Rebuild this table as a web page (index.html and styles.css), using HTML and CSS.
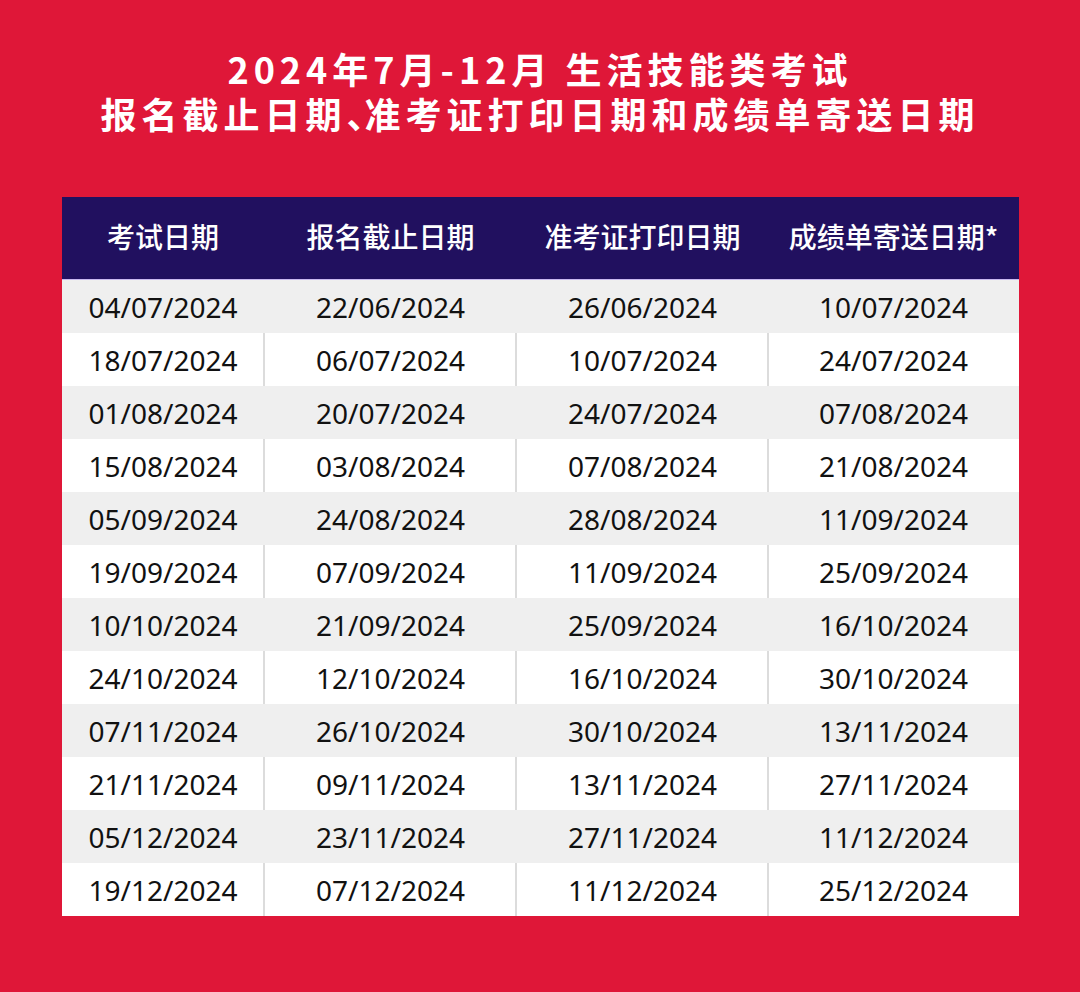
FILE: index.html
```html
<!DOCTYPE html>
<html lang="zh-CN">
<head>
<meta charset="utf-8">
<link rel="stylesheet" href="styles.css">
</head>
<body>
<div class="page">
  <h1 class="title">
    <span class="line">2024年7月-12月 生活技能类考试</span>
    <span class="line">报名截止日期<span class="punct">、</span>准考证打印日期和成绩单寄送日期</span>
  </h1>
  <div class="table">
    <div class="head">
      <div class="hc">考试日期</div>
      <div class="hc">报名截止日期</div>
      <div class="hc">准考证打印日期</div>
      <div class="hc">成绩单寄送日期*</div>
    </div>
    <div class="row odd"><div class="c">04/07/2024</div><div class="c">22/06/2024</div><div class="c">26/06/2024</div><div class="c">10/07/2024</div></div>
    <div class="row even"><div class="c">18/07/2024</div><div class="c">06/07/2024</div><div class="c">10/07/2024</div><div class="c">24/07/2024</div></div>
    <div class="row odd"><div class="c">01/08/2024</div><div class="c">20/07/2024</div><div class="c">24/07/2024</div><div class="c">07/08/2024</div></div>
    <div class="row even"><div class="c">15/08/2024</div><div class="c">03/08/2024</div><div class="c">07/08/2024</div><div class="c">21/08/2024</div></div>
    <div class="row odd"><div class="c">05/09/2024</div><div class="c">24/08/2024</div><div class="c">28/08/2024</div><div class="c">11/09/2024</div></div>
    <div class="row even"><div class="c">19/09/2024</div><div class="c">07/09/2024</div><div class="c">11/09/2024</div><div class="c">25/09/2024</div></div>
    <div class="row odd"><div class="c">10/10/2024</div><div class="c">21/09/2024</div><div class="c">25/09/2024</div><div class="c">16/10/2024</div></div>
    <div class="row even"><div class="c">24/10/2024</div><div class="c">12/10/2024</div><div class="c">16/10/2024</div><div class="c">30/10/2024</div></div>
    <div class="row odd"><div class="c">07/11/2024</div><div class="c">26/10/2024</div><div class="c">30/10/2024</div><div class="c">13/11/2024</div></div>
    <div class="row even"><div class="c">21/11/2024</div><div class="c">09/11/2024</div><div class="c">13/11/2024</div><div class="c">27/11/2024</div></div>
    <div class="row odd"><div class="c">05/12/2024</div><div class="c">23/11/2024</div><div class="c">27/11/2024</div><div class="c">11/12/2024</div></div>
    <div class="row even"><div class="c">19/12/2024</div><div class="c">07/12/2024</div><div class="c">11/12/2024</div><div class="c">25/12/2024</div></div>
  </div>
</div>
</body>
</html>
```
FILE: styles.css
```css
html, body {
  margin: 0;
  padding: 0;
}
body {
  background: #df1738;
  font-family: "Noto Sans", "Noto Sans CJK SC", sans-serif;
}
.page {
  width: 1080px;
  height: 992px;
  box-sizing: border-box;
  padding-top: 46px;
  display: flex;
  flex-direction: column;
  align-items: center;
}
.title {
  margin: 0;
  display: flex;
  flex-direction: column;
  align-items: center;
  color: #fff;
  font-family: "Noto Sans CJK SC", sans-serif;
  font-weight: 700;
  font-size: 36px;
  line-height: 45px;
  letter-spacing: 5px;
}
.line {
  display: block;
}
.punct {
  font-feature-settings: "halt";
  letter-spacing: 0;
}
.table {
  margin-top: 61px;
  width: 957px;
  display: flex;
  flex-direction: column;
  background: #fff;
}
.head, .row {
  display: grid;
  grid-template-columns: 203px 252px 252px 250px;
}
.head {
  height: 82px;
  background: #21105f;
  border-bottom: 1px solid #c9b8f0;
}
.hc {
  display: flex;
  align-items: center;
  justify-content: center;
  color: #fff;
  font-family: "Noto Sans CJK SC", sans-serif;
  font-weight: 500;
  font-size: 28px;
  padding-bottom: 4px;
}
.row {
  height: 53px;
}
.row.odd {
  background: #efefef;
}
.row.even {
  background: #fff;
}
.c {
  display: flex;
  align-items: center;
  justify-content: center;
  font-size: 28px;
  color: #111;
}
.row.even .c + .c {
  border-left: 2px solid #dcdcdc;
  margin-left: -2px;
}
```
